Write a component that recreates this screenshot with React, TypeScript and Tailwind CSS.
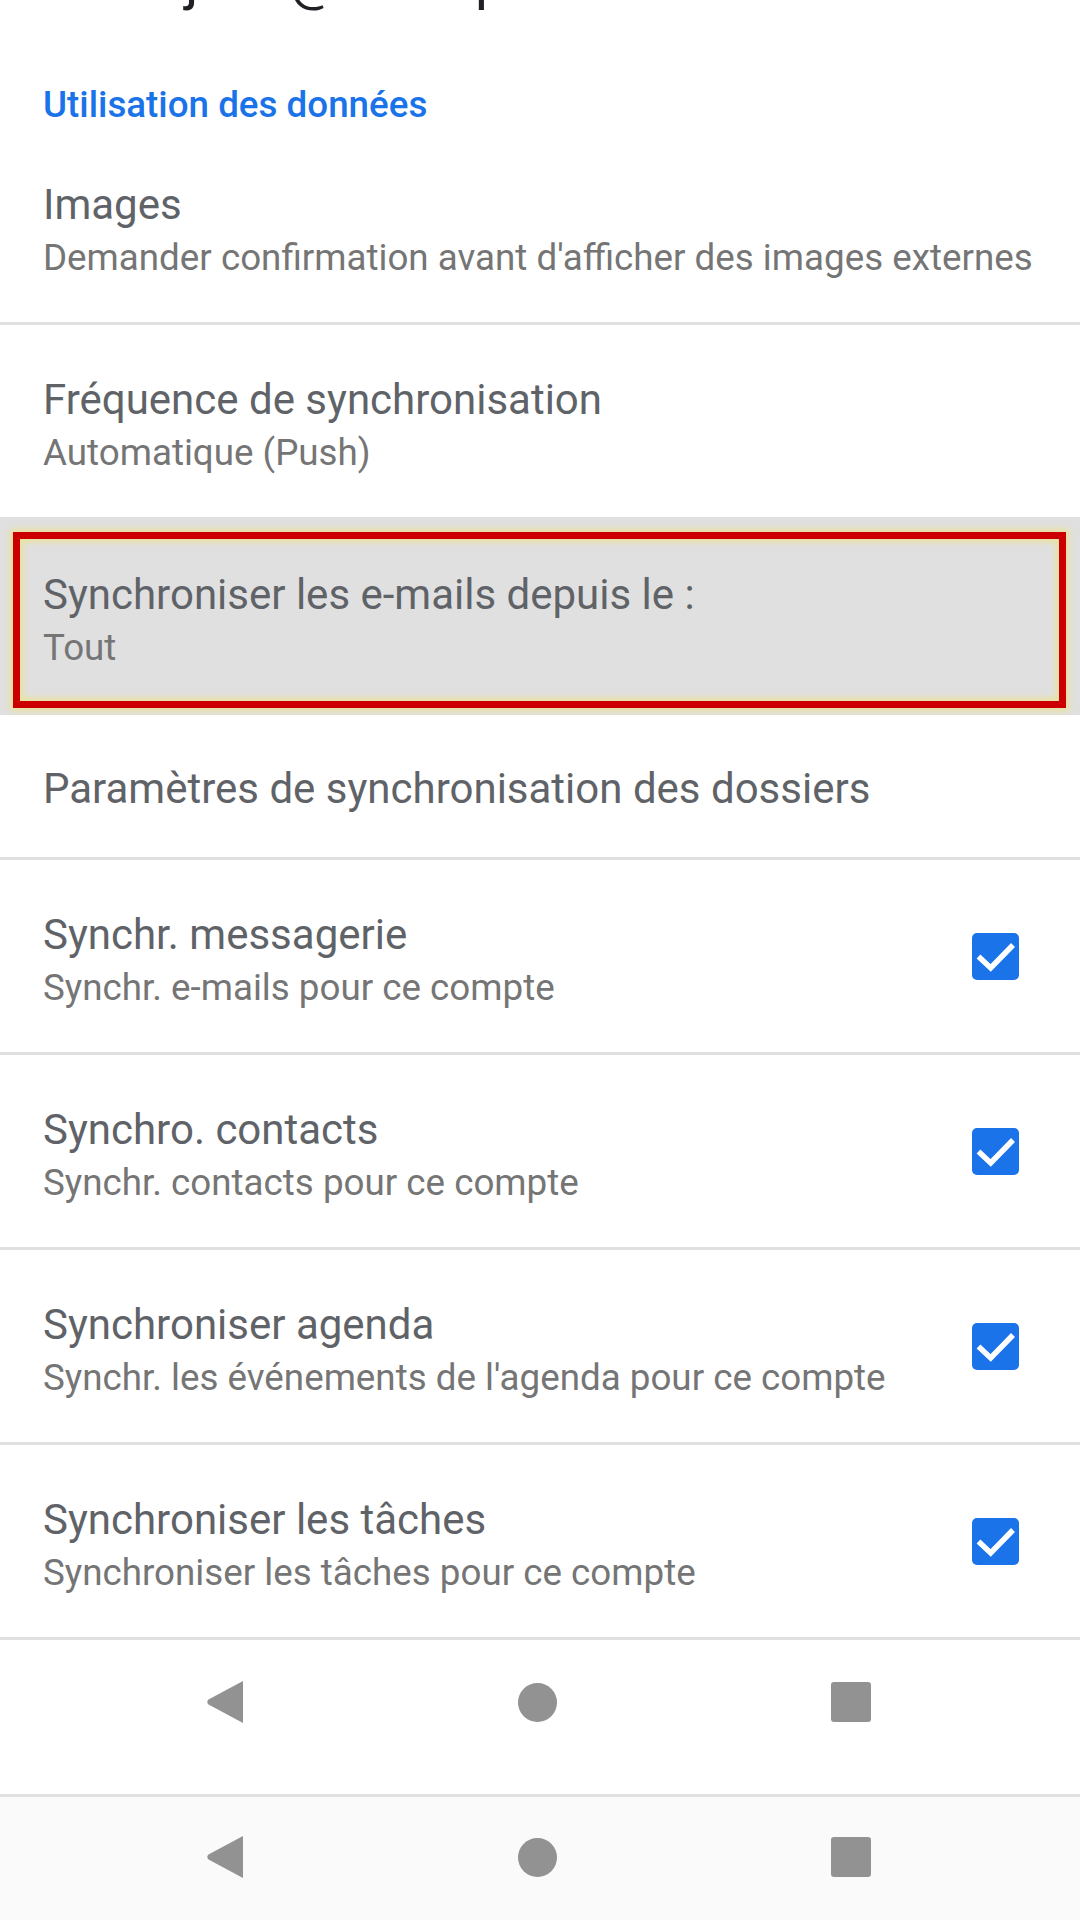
import React from "react";

const font = { fontFamily: "Roboto, 'Noto Sans', sans-serif" };

function Check() {
  return (
    <svg width="47" height="47" viewBox="0 0 47 47" className="shrink-0">
      <rect x="0" y="0" width="47" height="47" rx="5" fill="#1a73e8" />
      <polyline points="6.5,23.5 18.7,35 41,12" fill="none" stroke="#ffffff" strokeWidth="5.5" strokeLinecap="butt" strokeLinejoin="miter" />
    </svg>
  );
}

function Divider() {
  return <div className="h-[3px] bg-[#e0e0e0]" />;
}

function Row({ title, subtitle, checked }: { title: string; subtitle?: string; checked?: boolean }) {
  return (
    <div>
      <div className="flex items-center h-[192px] pl-[43px] pr-[61px]">
        <div className="flex-1 flex flex-col self-start pt-[49px]">
          <div className="text-[42px] leading-[52px] text-[#5f6368] whitespace-nowrap">{title}</div>
          {subtitle && <div className="text-[36.75px] leading-[50px] mt-[2px] text-[#757575] whitespace-nowrap">{subtitle}</div>}
        </div>
        {checked && <Check />}
      </div>
      <Divider />
    </div>
  );
}

function NavIcons() {
  return (
    <div className="flex items-center justify-between pl-[207px] pr-[209px]">
      <svg width="36" height="42" viewBox="0 0 36 42">
        <path d="M36 0 L36 42 L1.5 23.5 Q-1 21 1.5 18.5 Z" fill="#929292" />
      </svg>
      <div className="w-[39px] h-[39px] rounded-full bg-[#929292]" />
      <div className="w-[40px] h-[40px] rounded-[3px] bg-[#929292]" />
    </div>
  );
}

export default function App() {
  return (
    <div className="w-[1080px] h-[1920px] bg-white overflow-hidden flex flex-col" style={font}>
      <div className="h-[12px] overflow-hidden relative">
        <div className="absolute left-[185px] top-[-52px] text-[56px] leading-[64px] text-[#202124] whitespace-nowrap">
          jose@exemple.fr
        </div>
      </div>
      <div className="h-[118px] pl-[43px] pt-[73px]">
        <div className="text-[36.75px] leading-[40px] font-medium text-[#1a73e8] whitespace-nowrap">Utilisation des données</div>
      </div>
      <Row title="Images" subtitle="Demander confirmation avant d'afficher des images externes" />
      <Row title="Fréquence de synchronisation" subtitle="Automatique (Push)" />
      <div className="relative bg-[#e0e0e0]">
        <Row title="Synchroniser les e-mails depuis le :" subtitle="Tout" />
        <div className="absolute top-[12px] left-[13px] right-[14px] bottom-[7px] border-[7px] border-[#cc0000] shadow-[0_0_6px_3px_rgba(236,226,150,0.9),inset_0_0_6px_3px_rgba(236,226,150,0.9)]" />
      </div>
      <div>
        <div className="flex items-center h-[142px] pl-[43px]">
          <div className="text-[42px] leading-[52px] text-[#5f6368] mt-[6px] whitespace-nowrap">Paramètres de synchronisation des dossiers</div>
        </div>
        <Divider />
      </div>
      <Row title="Synchr. messagerie" subtitle="Synchr. e-mails pour ce compte" checked />
      <Row title="Synchro. contacts" subtitle="Synchr. contacts pour ce compte" checked />
      <Row title="Synchroniser agenda" subtitle="Synchr. les événements de l'agenda pour ce compte" checked />
      <Row title="Synchroniser les tâches" subtitle="Synchroniser les tâches pour ce compte" checked />
      <div className="h-[154px] pt-[41px] bg-white">
        <NavIcons />
      </div>
      <Divider />
      <div className="flex-1 bg-[#fafafa] pt-[39px]">
        <NavIcons />
      </div>
    </div>
  );
}
